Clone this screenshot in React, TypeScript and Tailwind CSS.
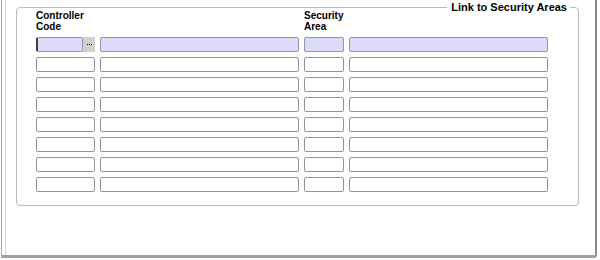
import React from "react";

const rows = [0, 1, 2, 3, 4, 5, 6, 7];

export default function App() {
  return (
    <div
      className="w-[600px] h-[260px] bg-white pl-[1px] overflow-hidden"
      style={{ fontFamily: '"Liberation Sans", Arial, sans-serif' }}
    >
      <div className="w-[596px] h-[258px] border-l border-[#a8a8a8] border-r-2 border-r-[#8a8a8a] border-b-[3px] border-b-[#a0a0a0] rounded-br-[3px] pl-[3px]">
        <div className="h-full border-l border-[#d8d8d8] pl-[10px] pt-[7px] pr-[16px]">
          <div className="relative h-[199px] border border-[#b4bcc6] rounded-[4px]">
            <div className="absolute right-[8px] top-[-7px] bg-white pl-[4px] pr-[3px] text-[11px] leading-[12px] font-bold text-black">
              Link to Security Areas
            </div>
            <div className="pl-[19px] pt-[2px]">
              <div className="flex text-[10px] leading-[11px] font-bold text-black h-[26px]">
                <div className="w-[268px]">
                  Controller
                  <br />
                  Code
                </div>
                <div>
                  Security
                  <br />
                  Area
                </div>
              </div>
              <div className="flex flex-col gap-[5px] mt-[1px]">
                {rows.map((i) => {
                  const first = i === 0;
                  const bg = first ? "bg-[#dcdcfa]" : "bg-white";
                  return (
                    <div key={i} className="flex h-[15px]">
                      {first ? (
                        <div className="flex w-[59px]">
                          <div className="w-[47px] h-[15px] bg-[#dcdcfa] border border-[#8c96a4] border-l-2 border-l-[#404040] rounded-[2px]" />
                          <div className="w-[12px] h-[15px] bg-[#d0d0d0] flex items-center justify-center gap-[1px]">
                            <span className="w-[1px] h-[1px] bg-black" />
                            <span className="w-[1px] h-[1px] bg-black" />
                            <span className="w-[1px] h-[1px] bg-black" />
                          </div>
                        </div>
                      ) : (
                        <div className={`w-[59px] h-[15px] ${bg} border border-[#8c96a4] rounded-[2px]`} />
                      )}
                      <div className={`ml-[5px] w-[199px] h-[15px] ${bg} border border-[#8c96a4] rounded-[2px]`} />
                      <div className={`ml-[5px] w-[40px] h-[15px] ${bg} border border-[#8c96a4] rounded-[2px]`} />
                      <div className={`ml-[5px] w-[199px] h-[15px] ${bg} border border-[#8c96a4] rounded-[2px]`} />
                    </div>
                  );
                })}
              </div>
            </div>
          </div>
        </div>
      </div>
    </div>
  );
}
